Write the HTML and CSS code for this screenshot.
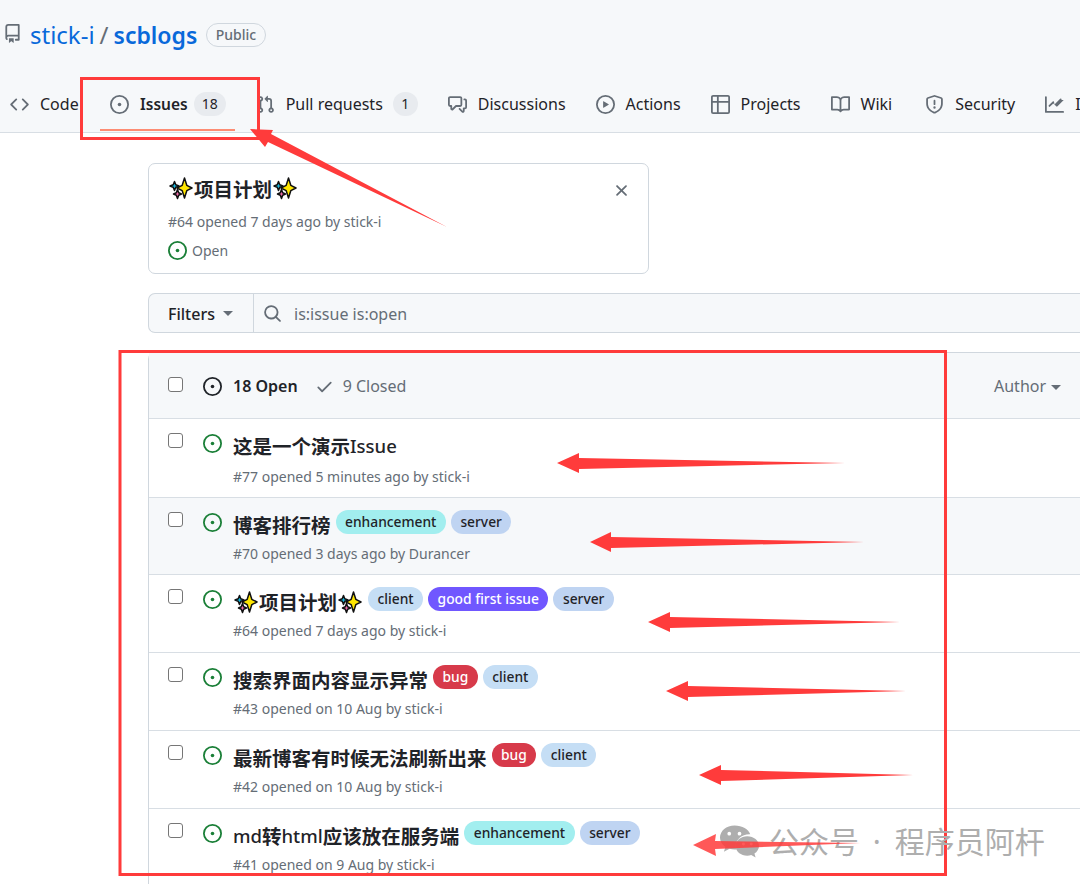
FILE: index.html
```html
<!DOCTYPE html>
<html lang="en">
<head>
    <meta charset="UTF-8">
    <meta name="viewport" content="width=device-width, initial-scale=1.0">
    <title>stick-i / scblogs Issues</title>
    <link rel="stylesheet" href="styles.css">
</head>
<body>
    <svg class="sprite" width="0" height="0">
        <symbol id="i-repo" viewBox="0 0 16 16"><path d="M2 2.5A2.5 2.5 0 0 1 4.5 0h8.75a.75.75 0 0 1 .75.75v12.5a.75.75 0 0 1-.75.75h-2.5a.75.75 0 0 1 0-1.5h1.75v-2h-8a1 1 0 0 0-.714 1.7.75.75 0 1 1-1.072 1.05A2.495 2.495 0 0 1 2 11.5Zm10.5-1h-8a1 1 0 0 0-1 1v6.708A2.486 2.486 0 0 1 4.5 9h8ZM5 12.25a.25.25 0 0 1 .25-.25h3.5a.25.25 0 0 1 .25.25v3.25a.25.25 0 0 1-.4.2l-1.45-1.087a.249.249 0 0 0-.3 0L5.4 15.7a.25.25 0 0 1-.4-.2Z"/></symbol>
        <symbol id="i-code" viewBox="0 0 16 16"><path d="m11.28 3.22 4.25 4.25a.75.75 0 0 1 0 1.06l-4.25 4.25a.749.749 0 0 1-1.275-.326.749.749 0 0 1 .215-.734L13.94 8l-3.72-3.72a.749.749 0 0 1 .326-1.275.749.749 0 0 1 .734.215Zm-6.56 0a.751.751 0 0 1 1.042.018.751.751 0 0 1 .018 1.042L2.06 8l3.72 3.72a.749.749 0 0 1-.326 1.275.749.749 0 0 1-.734-.215L.47 8.53a.75.75 0 0 1 0-1.06Z"/></symbol>
        <symbol id="i-issue" viewBox="0 0 16 16"><path d="M8 9.5a1.5 1.5 0 1 0 0-3 1.5 1.5 0 0 0 0 3Z"/><path d="M8 0a8 8 0 1 1 0 16A8 8 0 0 1 8 0ZM1.5 8a6.5 6.5 0 1 0 13 0 6.5 6.5 0 0 0-13 0Z"/></symbol>
        <symbol id="i-pr" viewBox="0 0 16 16"><path d="M1.5 3.25a2.25 2.25 0 1 1 3 2.122v5.256a2.251 2.251 0 1 1-1.5 0V5.372A2.25 2.25 0 0 1 1.5 3.25Zm5.677-.177L9.573.677A.25.25 0 0 1 10 .854V2.5h1A2.5 2.5 0 0 1 13.5 5v5.628a2.251 2.251 0 1 1-1.5 0V5a1 1 0 0 0-1-1h-1v1.646a.25.25 0 0 1-.427.177L7.177 3.427a.25.25 0 0 1 0-.354ZM3.75 2.5a.75.75 0 1 0 0 1.5.75.75 0 0 0 0-1.5Zm0 9.5a.75.75 0 1 0 0 1.5.75.75 0 0 0 0-1.5Zm8.25.75a.75.75 0 1 0 1.5 0 .75.75 0 0 0-1.5 0Z"/></symbol>
        <symbol id="i-discuss" viewBox="0 0 16 16"><path d="M1.75 1h8.5c.966 0 1.75.784 1.75 1.75v5.5A1.75 1.75 0 0 1 10.25 10H7.061l-2.574 2.573A1.458 1.458 0 0 1 2 11.543V10h-.25A1.75 1.75 0 0 1 0 8.25v-5.5C0 1.784.784 1 1.75 1ZM1.5 2.75v5.5c0 .138.112.25.25.25h1a.75.75 0 0 1 .75.75v2.19l2.72-2.72a.749.749 0 0 1 .53-.22h3.5a.25.25 0 0 0 .25-.25v-5.5a.25.25 0 0 0-.25-.25h-8.5a.25.25 0 0 0-.25.25Zm13 2a.25.25 0 0 0-.25-.25h-.5a.75.75 0 0 1 0-1.5h.5c.966 0 1.75.784 1.75 1.75v5.5A1.75 1.75 0 0 1 14.25 12H14v1.543a1.458 1.458 0 0 1-2.487 1.03L9.22 12.28a.749.749 0 0 1 .326-1.275.749.749 0 0 1 .734.215l2.22 2.22v-2.19a.75.75 0 0 1 .75-.75h1a.25.25 0 0 0 .25-.25Z"/></symbol>
        <symbol id="i-play" viewBox="0 0 16 16"><path d="M8 0a8 8 0 1 1 0 16A8 8 0 0 1 8 0ZM1.5 8a6.5 6.5 0 1 0 13 0 6.5 6.5 0 0 0-13 0Zm4.879-2.773 4.264 2.559a.25.25 0 0 1 0 .428l-4.264 2.559A.25.25 0 0 1 6 10.559V5.442a.25.25 0 0 1 .379-.215Z"/></symbol>
        <symbol id="i-table" viewBox="0 0 16 16"><path d="M0 1.75C0 .784.784 0 1.75 0h12.5C15.216 0 16 .784 16 1.75v12.5A1.75 1.75 0 0 1 14.25 16H1.75A1.75 1.75 0 0 1 0 14.25ZM6.5 6.5v8h7.75a.25.25 0 0 0 .25-.25V6.5Zm8-1.5V1.75a.25.25 0 0 0-.25-.25H6.5V5Zm-13 1.5v7.75c0 .138.112.25.25.25H5v-8ZM5 5V1.5H1.75a.25.25 0 0 0-.25.25V5Z"/></symbol>
        <symbol id="i-book" viewBox="0 0 16 16"><path d="M0 1.75A.75.75 0 0 1 .75 1h4.253c1.227 0 2.317.59 3 1.501A3.743 3.743 0 0 1 11.006 1h4.245a.75.75 0 0 1 .75.75v10.5a.75.75 0 0 1-.75.75h-4.507a2.25 2.25 0 0 0-1.591.659l-.622.621a.75.75 0 0 1-1.06 0l-.622-.621A2.25 2.25 0 0 0 5.258 13H.75a.75.75 0 0 1-.75-.75Zm7.251 10.324.004-5.073-.002-2.253A2.25 2.25 0 0 0 5.003 2.5H1.5v9h3.757a3.75 3.75 0 0 1 1.994.574ZM8.755 4.75l-.004 7.322a3.752 3.752 0 0 1 1.992-.572H14.5v-9h-3.495a2.25 2.25 0 0 0-2.25 2.25Z"/></symbol>
        <symbol id="i-shield" viewBox="0 0 16 16"><path d="M7.467.133a1.748 1.748 0 0 1 1.066 0l5.25 1.68A1.75 1.75 0 0 1 15 3.48V7c0 1.566-.32 3.182-1.303 4.682-.983 1.498-2.585 2.813-5.032 3.855a1.697 1.697 0 0 1-1.33 0c-2.447-1.042-4.049-2.357-5.032-3.855C1.32 10.182 1 8.566 1 7V3.48a1.75 1.75 0 0 1 1.217-1.667Zm.61 1.429a.25.25 0 0 0-.153 0l-5.25 1.68a.25.25 0 0 0-.174.238V7c0 1.358.275 2.666 1.057 3.86.784 1.194 2.121 2.34 4.366 3.297a.196.196 0 0 0 .154 0c2.245-.956 3.582-2.104 4.366-3.298C13.225 9.666 13.5 8.36 13.5 7V3.48a.251.251 0 0 0-.174-.237l-5.25-1.68ZM8.75 4.75v3a.75.75 0 0 1-1.5 0v-3a.75.75 0 0 1 1.5 0ZM9 10.5a1 1 0 1 1-2 0 1 1 0 0 1 2 0Z"/></symbol>
        <symbol id="i-graph" viewBox="0 0 16 16"><path d="M1.5 1.75V13.5h13.75a.75.75 0 0 1 0 1.5H.75a.75.75 0 0 1-.75-.75V1.75a.75.75 0 0 1 1.5 0Zm14.28 2.53-5.25 5.25a.75.75 0 0 1-1.06 0L7 7.06 4.28 9.78a.751.751 0 0 1-1.042-.018.751.751 0 0 1-.018-1.042l3.25-3.25a.75.75 0 0 1 1.06 0L8 7.94l4.72-4.72a.751.751 0 0 1 1.042.018.751.751 0 0 1 .018 1.042Z"/></symbol>
        <symbol id="i-x" viewBox="0 0 16 16"><path d="M3.72 3.72a.75.75 0 0 1 1.06 0L8 6.94l3.22-3.22a.749.749 0 0 1 1.275.326.749.749 0 0 1-.215.734L9.06 8l3.22 3.22a.749.749 0 0 1-.326 1.275.749.749 0 0 1-.734-.215L8 9.06l-3.22 3.22a.751.751 0 0 1-1.042-.018.751.751 0 0 1-.018-1.042L6.94 8 3.72 4.78a.75.75 0 0 1 0-1.06Z"/></symbol>
        <symbol id="i-search" viewBox="0 0 16 16"><path d="M10.68 11.74a6 6 0 0 1-7.922-8.982 6 6 0 0 1 8.982 7.922l3.04 3.04a.749.749 0 0 1-.326 1.275.749.749 0 0 1-.734-.215ZM11.5 7a4.499 4.499 0 1 0-8.997 0A4.499 4.499 0 0 0 11.5 7Z"/></symbol>
        <symbol id="i-check" viewBox="0 0 16 16"><path d="M13.78 4.22a.75.75 0 0 1 0 1.06l-7.25 7.25a.75.75 0 0 1-1.06 0L2.22 9.28a.751.751 0 0 1 .018-1.042.751.751 0 0 1 1.042-.018L6 10.94l6.72-6.72a.75.75 0 0 1 1.06 0Z"/></symbol>
        <symbol id="i-sparkles" viewBox="0 0 24 24">
            <path d="M15.500 2 L17.800 9.300 L23 12 L17.800 14.700 L15.500 22 L13.200 14.700 L8 12 L13.200 9.300 Z" fill="#ffe600" stroke="#111" stroke-width="1.500" stroke-linejoin="round"/>
            <path d="M5.500 5.500 L6.800 8.700 L10 10 L6.800 11.300 L5.500 14.500 L4.200 11.300 L1 10 L4.200 8.700 Z" fill="#16b4dc" stroke="#111" stroke-width="1.500" stroke-linejoin="round"/>
            <path d="M8.500 13.500 L9.700 16.800 L12.500 18 L9.700 19.200 L8.500 22.500 L7.300 19.200 L4.500 18 L7.300 16.800 Z" fill="#ee6aa8" stroke="#111" stroke-width="1.500" stroke-linejoin="round"/>
        </symbol>
    </svg>

    <header class="repo-head">
        <div class="repo-title">
            <svg class="icon repo-icon"><use href="#i-repo"/></svg>
            <a class="owner">stick-i</a>
            <span class="slash">/</span>
            <a class="repo-name">scblogs</a>
            <span class="public">Public</span>
        </div>
        <nav class="tabs">
            <a class="tab tab-code"><svg class="icon"><use href="#i-code"/></svg>Code</a>
            <a class="tab active"><svg class="icon"><use href="#i-issue"/></svg>Issues<span class="count">18</span></a>
            <a class="tab"><svg class="icon"><use href="#i-pr"/></svg>Pull requests<span class="count">1</span></a>
            <a class="tab"><svg class="icon"><use href="#i-discuss"/></svg>Discussions</a>
            <a class="tab"><svg class="icon"><use href="#i-play"/></svg>Actions</a>
            <a class="tab"><svg class="icon"><use href="#i-table"/></svg>Projects</a>
            <a class="tab tab-wiki"><svg class="icon"><use href="#i-book"/></svg>Wiki</a>
            <a class="tab"><svg class="icon"><use href="#i-shield"/></svg>Security</a>
            <a class="tab"><svg class="icon"><use href="#i-graph"/></svg>Insights</a>
        </nav>
    </header>

    <main class="content">
        <section class="pinned">
            <div class="pinned-title">
                <svg class="sparkles"><use href="#i-sparkles"/></svg>项目计划<svg class="sparkles"><use href="#i-sparkles"/></svg>
            </div>
            <div class="meta">#64 opened 7 days ago by stick-i</div>
            <div class="pinned-state"><svg class="icon open-icon"><use href="#i-issue"/></svg>Open</div>
            <svg class="icon pinned-close"><use href="#i-x"/></svg>
        </section>

        <div class="filter-bar">
            <button class="filter-btn">Filters<span class="caret"></span></button>
            <div class="filter-input"><svg class="icon"><use href="#i-search"/></svg>is:issue is:open</div>
        </div>

        <section class="issues">
            <div class="issues-head">
                <span class="box"></span>
                <svg class="icon state-icon"><use href="#i-issue"/></svg>
                <strong class="open-count">18 Open</strong>
                <svg class="icon check-icon"><use href="#i-check"/></svg>
                <span class="closed-count">9 Closed</span>
                <span class="author">Author<span class="caret"></span></span>
            </div>

            <div class="issue plain">
                <span class="box"></span>
                <svg class="icon open-icon"><use href="#i-issue"/></svg>
                <div class="issue-body">
                    <div class="issue-title"><a>这是一个演示<span class="latin">Issue</span></a></div>
                    <div class="meta">#77 opened 5 minutes ago by stick-i</div>
                </div>
            </div>
            <div class="issue hover">
                <span class="box"></span>
                <svg class="icon open-icon"><use href="#i-issue"/></svg>
                <div class="issue-body">
                    <div class="issue-title"><a>博客排行榜</a><span class="label enhancement">enhancement</span><span class="label server">server</span></div>
                    <div class="meta">#70 opened 3 days ago by Durancer</div>
                </div>
            </div>
            <div class="issue">
                <span class="box"></span>
                <svg class="icon open-icon"><use href="#i-issue"/></svg>
                <div class="issue-body">
                    <div class="issue-title"><a><svg class="sparkles"><use href="#i-sparkles"/></svg>项目计划<svg class="sparkles"><use href="#i-sparkles"/></svg></a><span class="label client">client</span><span class="label first">good first issue</span><span class="label server">server</span></div>
                    <div class="meta">#64 opened 7 days ago by stick-i</div>
                </div>
            </div>
            <div class="issue">
                <span class="box"></span>
                <svg class="icon open-icon"><use href="#i-issue"/></svg>
                <div class="issue-body">
                    <div class="issue-title"><a>搜索界面内容显示异常</a><span class="label bug">bug</span><span class="label client">client</span></div>
                    <div class="meta">#43 opened on 10 Aug by stick-i</div>
                </div>
            </div>
            <div class="issue">
                <span class="box"></span>
                <svg class="icon open-icon"><use href="#i-issue"/></svg>
                <div class="issue-body">
                    <div class="issue-title"><a>最新博客有时候无法刷新出来</a><span class="label bug">bug</span><span class="label client">client</span></div>
                    <div class="meta">#42 opened on 10 Aug by stick-i</div>
                </div>
            </div>
            <div class="issue">
                <span class="box"></span>
                <svg class="icon open-icon"><use href="#i-issue"/></svg>
                <div class="issue-body">
                    <div class="issue-title"><a><span class="latin">md</span>转<span class="latin">html</span>应该放在服务端</a><span class="label enhancement">enhancement</span><span class="label server">server</span></div>
                    <div class="meta">#41 opened on 9 Aug by stick-i</div>
                </div>
            </div>
        </section>
    </main>

    <!-- red annotations drawn on top of the screenshot -->
    <svg class="marks" viewBox="0 0 1080 884">
        <rect x="81.5" y="78.5" width="177" height="60" fill="none" stroke="#ff3b3b" stroke-width="3"/>
        <rect x="120" y="351.500" width="825.500" height="523" fill="none" stroke="#ff3b3b" stroke-width="3"/>
        <path d="M250 129 L273 130 L271 134 L447 227 L268 142 L265 147 Z" fill="#ff3b3b"/>
        <path d="M557 463 L579 453 L579 458 L845 463 L579 469 L579 473 Z" fill="#ff3b3b"/>
        <path d="M590 542 L611 532 L611 537 L864 542 L611 548 L611 552 Z" fill="#ff3b3b"/>
        <path d="M648 622 L670 612 L670 617 L900 622 L670 628 L670 632 Z" fill="#ff3b3b"/>
        <path d="M666 691 L688 681 L688 686 L906 691 L688 697 L688 701 Z" fill="#ff3b3b"/>
        <path d="M699 775 L721 765 L721 770 L913 775 L721 781 L721 785 Z" fill="#ff3b3b"/>
    </svg>

    <div class="watermark">
        <svg class="wechat" viewBox="0 0 42 36">
            <path d="M16 1C7.500 1 1 6.600 1 13.400c0 3.900 2.200 7.300 5.600 9.600L5 28l5.800-3c1.700.5 3.400.8 5.200.8.600 0 1.200 0 1.800-.1-.4-1.200-.6-2.400-.6-3.700 0-6.600 6.100-12 13.800-12h1C30.400 4.700 23.800 1 16 1Z" fill="#aeaeae"/>
            <path d="M41 22c0-5.600-5.400-10-12-10s-12 4.400-12 10 5.400 10 12 10c1.400 0 2.700-.2 4-.6l4.500 2.500-1.200-4C38.900 28 41 25.200 41 22Z" fill="#aeaeae"/>
            <circle cx="10.500" cy="9.500" r="1.900" fill="#fff"/><circle cx="21" cy="9.500" r="1.900" fill="#fff"/>
            <circle cx="25" cy="20" r="1.500" fill="#fff"/><circle cx="33" cy="20" r="1.500" fill="#fff"/>
        </svg>
        <span>公众号 · 程序员阿杆</span>
    </div>
    <svg class="marks" viewBox="0 0 1080 884">
        <path d="M693 845 L716 834 L715 841 L860 843 L715 849 L716 856 Z" fill="#ff3b3b" fill-opacity="0.85"/>
    </svg>
</body>
</html>
```

FILE: styles.css
```css
* {
    box-sizing: border-box;
}

html, body {
    height: 884px;
}

body {
    position: relative;
    margin: 0;
    overflow: hidden;
    background-color: #fff;
    color: #1f2328;
    font-family: "Noto Sans", "Noto Sans CJK SC", sans-serif;
    font-size: 16px;
}

.sprite {
    position: absolute;
}

.icon {
    flex: none;
    width: 19px;
    height: 19px;
    fill: #656d76;
}

/* header */
.repo-head {
    height: 133px;
    background-color: #f6f8fa;
    border-bottom: 1px solid #d8dee4;
}

.repo-title {
    display: flex;
    align-items: center;
    height: 69px;
    padding-left: 3px;
    font-size: 24px;
}

.repo-icon {
    margin-right: 8px;
    margin-top: -3px;
}

.owner {
    color: #0969da;
}

.slash {
    margin: 0 5px;
    color: #656d76;
}

.repo-name {
    color: #0969da;
    font-size: 23px;
    font-weight: 600;
}

.public {
    margin-left: 9px;
    padding: 0 8.5px;
    height: 24px;
    line-height: 22px;
    border: 1px solid #d0d7de;
    border-radius: 12px;
    color: #656d76;
    font-size: 14px;
    font-weight: 500;
}

.tabs {
    display: flex;
    align-items: center;
    gap: 30px;
    height: 63px;
    padding: 7px 0 0 10px;
    white-space: nowrap;
}

.tab {
    position: relative;
    flex: none;
    display: flex;
    align-items: center;
    gap: 11px;
    height: 24px;
    color: #1f2328;
}

.tab-code {
    width: 70px;
    overflow: hidden;
}

.tab-wiki {
    padding-right: 3px;
}

.tab.active {
    font-size: 15.5px;
    font-weight: 600;
}

.tab.active::after {
    content: "";
    position: absolute;
    left: -10px;
    right: -9px;
    bottom: -15px;
    height: 2px;
    background-color: #fd8c73;
}

.count {
    min-width: 25px;
    margin-left: -1px;
    padding: 0 8px;
    height: 24px;
    line-height: 24px;
    border-radius: 12px;
    background-color: #e8ebef;
    text-align: center;
    font-size: 14px;
    font-weight: 400;
}

.tab.active .count {
    margin-left: -5px;
}

/* main column */
.content {
    padding: 30px 0 0 148px;
}

.pinned {
    position: relative;
    width: 501px;
    height: 111px;
    padding: 8px 19px;
    border: 1px solid #d0d7de;
    border-radius: 7px;
}

.pinned-title {
    display: flex;
    align-items: center;
    height: 32px;
    font-size: 19.5px;
    font-weight: 600;
}

.sparkles {
    flex: none;
    width: 24px;
    height: 24px;
    margin: 0 1px;
}

.pinned .meta {
    margin-top: 8px;
}

.pinned-state {
    display: flex;
    align-items: center;
    gap: 5px;
    margin-top: 9px;
    color: #656d76;
    font-size: 14px;
}

.pinned-close {
    position: absolute;
    top: 17px;
    right: 17px;
}

.meta {
    color: #656d76;
    font-size: 14px;
    line-height: 20px;
}

.filter-bar {
    display: flex;
    height: 40px;
    margin-top: 19px;
    border: 1px solid #d0d7de;
    border-right: 0;
    border-radius: 7px 0 0 7px;
    background-color: #f6f8fa;
}

.filter-btn {
    display: flex;
    align-items: center;
    gap: 8px;
    width: 105px;
    padding: 1px 0 0 19px;
    border: 0;
    border-right: 1px solid #d0d7de;
    background: none;
    color: #1f2328;
    font: 500 16px "Noto Sans", sans-serif;
}

.caret {
    display: inline-block;
    border-style: solid;
    border-width: 5px 5px 0;
    border-color: #656d76 transparent transparent;
}

.filter-input {
    display: flex;
    align-items: center;
    gap: 12px;
    padding: 1px 0 0 9px;
    color: #656d76;
}

/* issue list */
.issues {
    margin-top: 19px;
    border: 1px solid #d0d7de;
    border-right: 0;
    border-radius: 7px 0 0 0;
}

.issues-head {
    display: flex;
    align-items: center;
    height: 65px;
    padding: 1px 0 0 19px;
    background-color: #f6f8fa;
}

.box {
    flex: none;
    width: 15px;
    height: 15px;
    border: 1px solid #767676;
    border-radius: 3px;
    background-color: #fff;
}

.issues-head .box {
    margin-top: -4px;
}

.state-icon {
    margin-left: 20px;
    fill: #1f2328;
}

.open-count {
    margin-left: 11px;
    font-weight: 600;
}

.check-icon {
    margin-left: 17px;
}

.closed-count {
    margin-left: 9px;
    color: #656d76;
}

.author {
    position: absolute;
    left: 994px;
    color: #656d76;
}

.author .caret {
    margin-left: 5px;
    vertical-align: 2px;
}

.issue {
    display: flex;
    align-items: flex-start;
    height: 77.8px;
    padding: 14px 0 0 19px;
    border-top: 1px solid #d8dee4;
}

.issue.plain {
    height: 78.7px;
}

.issue.hover {
    background-color: #f6f8fa;
}

.open-icon {
    fill: #1a7f37;
}

.issue .open-icon {
    margin-left: 20px;
    margin-top: 1px;
}

.issue-body {
    margin-left: 11px;
    margin-top: -3px;
}

.issue-title {
    display: flex;
    align-items: center;
    height: 26px;
    white-space: nowrap;
}

.issue-title a {
    display: flex;
    align-items: center;
    margin-top: 5px;
    font-size: 19.5px;
    font-weight: 600;
}

.latin {
    font-size: 18.5px;
    font-weight: 500;
}

.issue-body .meta {
    margin-top: 9px;
}

.issue.plain .meta {
    margin-top: 10.5px;
}

.label {
    height: 24px;
    line-height: 24px;
    margin-left: 5px;
    padding: 0 9.5px;
    border-radius: 12px;
    font-size: 13.8px;
    font-weight: 500;
}

.enhancement {
    background-color: #a2eeef;
}

.server {
    background-color: #bfd4f2;
}

.client {
    background-color: #c5def5;
}

.first {
    background-color: #7057ff;
    color: #fff;
}

.bug {
    background-color: #d73a4a;
    color: #fff;
}

/* annotations */
.marks {
    position: absolute;
    top: 0;
    left: 0;
    width: 1080px;
    height: 884px;
    pointer-events: none;
}

.watermark {
    position: absolute;
    left: 719px;
    top: 822px;
    display: flex;
    align-items: center;
    gap: 9px;
    color: #aeaeae;
    font-size: 30px;
    line-height: 40px;
    word-spacing: 6px;
    white-space: nowrap;
}

.wechat {
    width: 41px;
    height: 36px;
}
```
